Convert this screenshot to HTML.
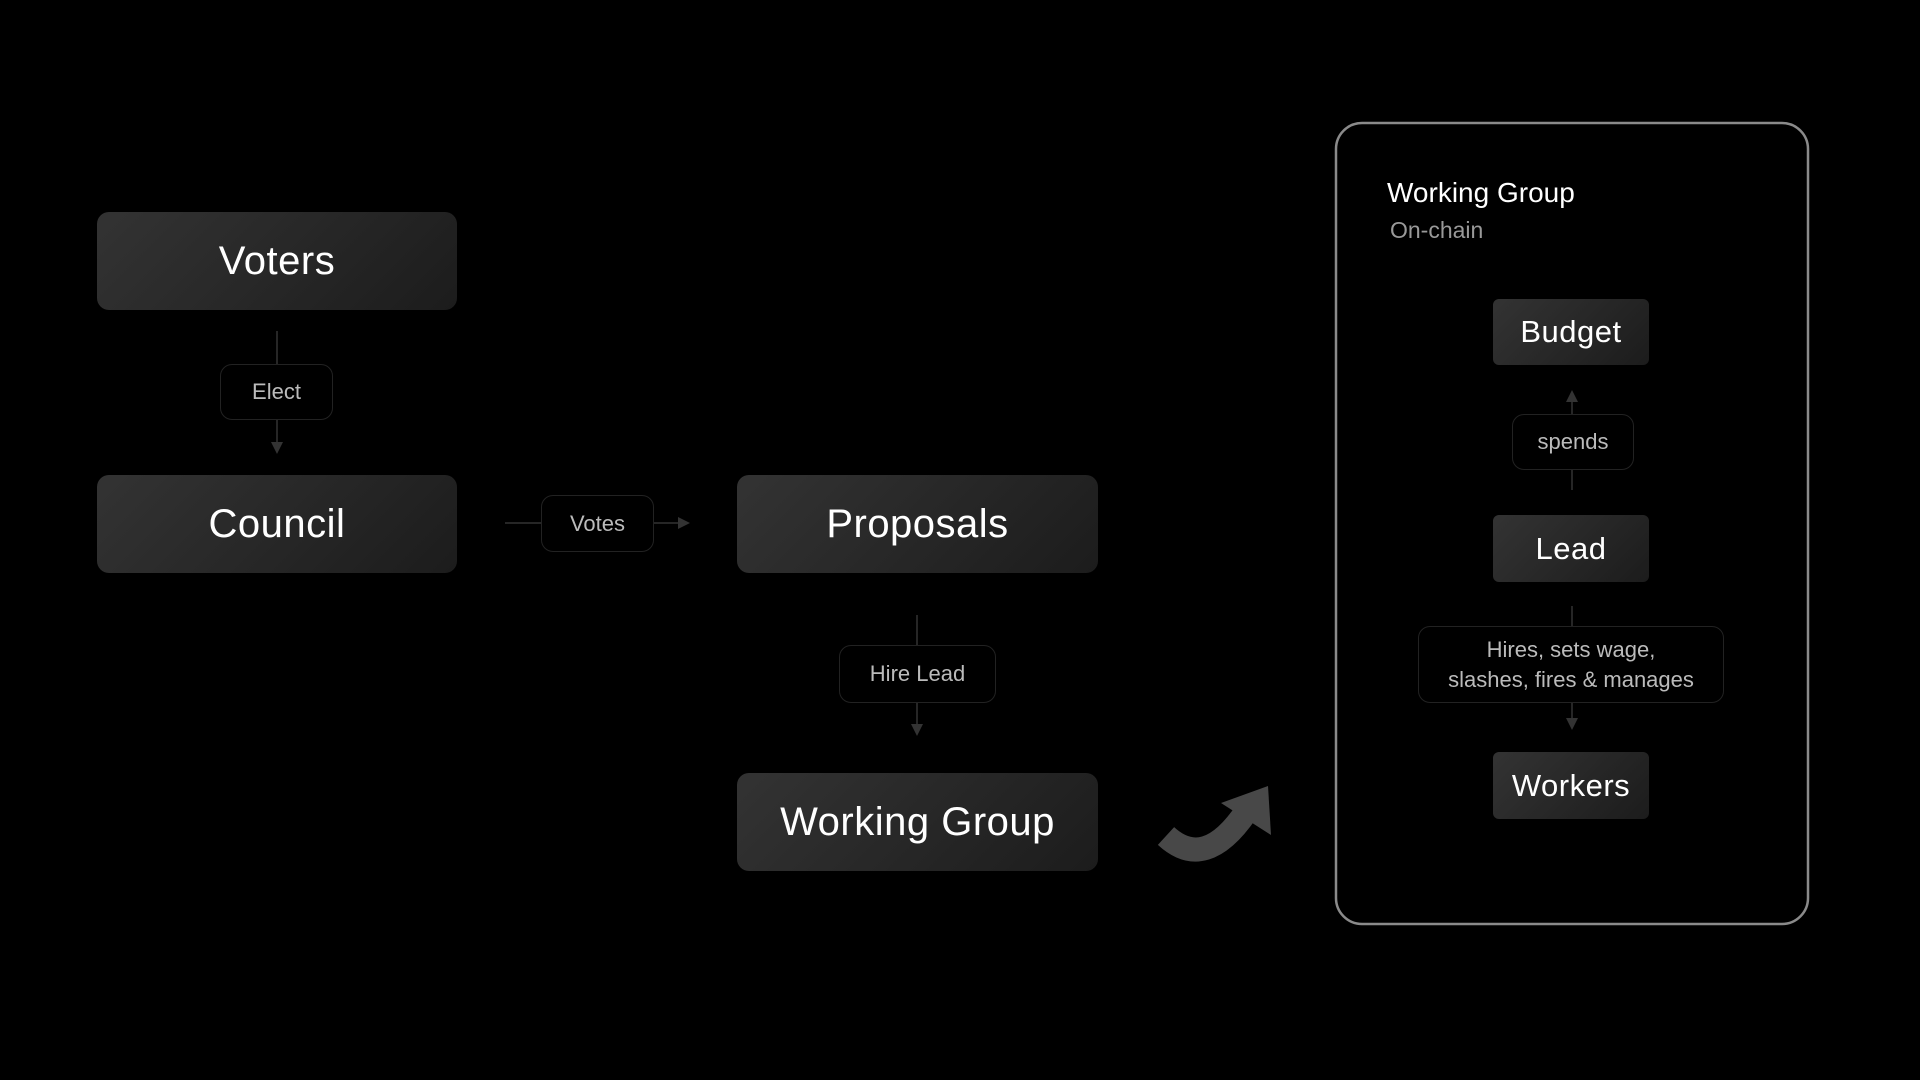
<!DOCTYPE html>
<html><head><meta charset="utf-8"><style>
html,body{margin:0;padding:0;background:#000;}
body{width:1920px;height:1080px;position:relative;overflow:hidden;font-family:"Liberation Sans",sans-serif;}
.box{position:absolute;background:linear-gradient(135deg,#333 0%,#1c1c1c 100%);border-radius:12px;color:#fff;display:flex;align-items:center;justify-content:center;letter-spacing:0.5px;}
.big{font-size:40px;}
.sm{font-size:31px;border-radius:6px;}
.lab{position:absolute;background:#000;border:1.5px solid #222;border-radius:12px;color:#bbb;font-size:22px;display:flex;align-items:center;justify-content:center;text-align:center;line-height:30px;box-sizing:border-box;}
svg{position:absolute;left:0;top:0;}
</style></head><body>
<svg width="1920" height="1080">
<defs><marker id="a" markerWidth="8" markerHeight="8" refX="4" refY="4" orient="auto"><path d="M0,0 L8,4 L0,8 z" fill="#333"/></marker></defs>
<g stroke="#333" stroke-width="1.5" fill="none">
<line x1="277" y1="331" x2="277" y2="448" marker-end="url(#a)"/>
<line x1="505" y1="523" x2="684" y2="523" marker-end="url(#a)"/>
<line x1="917" y1="615" x2="917" y2="730" marker-end="url(#a)"/>
<line x1="1572" y1="490" x2="1572" y2="396" marker-end="url(#a)"/>
<line x1="1572" y1="606" x2="1572" y2="724" marker-end="url(#a)"/>
</g>
<rect x="1336" y="123" width="472" height="801" rx="26" fill="none" stroke="#8a8a8a" stroke-width="2.5"/>
<path d="M1166,836 Q1205,872 1246,812" stroke="#484848" stroke-width="24" fill="none"/>
<polygon points="1268,786 1271,835 1221,803" fill="#484848"/>
</svg>
<div class="box big" style="left:97px;top:212px;width:360px;height:98px;">Voters</div>
<div class="box big" style="left:97px;top:475px;width:360px;height:98px;">Council</div>
<div class="box big" style="left:737px;top:475px;width:361px;height:98px;">Proposals</div>
<div class="box big" style="left:737px;top:773px;width:361px;height:98px;">Working Group</div>
<div class="lab" style="left:220px;top:364px;width:113px;height:56px;">Elect</div>
<div class="lab" style="left:541px;top:495px;width:113px;height:57px;">Votes</div>
<div class="lab" style="left:839px;top:645px;width:157px;height:58px;">Hire Lead</div>
<div style="position:absolute;left:1387px;top:177px;color:#fff;font-size:28px;">Working Group</div>
<div style="position:absolute;left:1390px;top:217px;color:#999;font-size:23px;">On-chain</div>
<div class="box sm" style="left:1493px;top:299px;width:156px;height:66px;">Budget</div>
<div class="lab" style="left:1512px;top:414px;width:122px;height:56px;">spends</div>
<div class="box sm" style="left:1493px;top:515px;width:156px;height:67px;">Lead</div>
<div class="lab" style="left:1418px;top:626px;width:306px;height:77px;">Hires, sets wage,<br>slashes, fires &amp; manages</div>
<div class="box sm" style="left:1493px;top:752px;width:156px;height:67px;">Workers</div>
</body></html>
